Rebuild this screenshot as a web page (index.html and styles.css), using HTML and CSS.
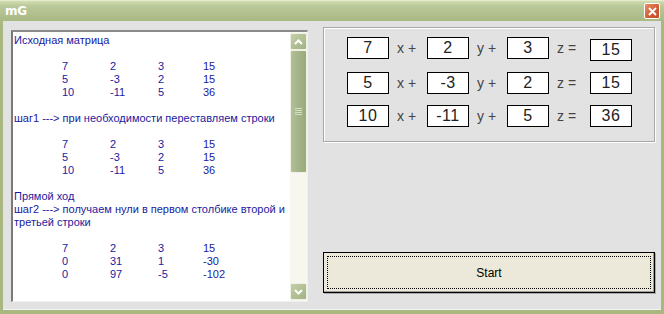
FILE: index.html
```html
<!doctype html>
<html lang="ru">
<head>
    <meta charset="UTF-8">
    <title>mG</title>
    <link rel="stylesheet" href="styles.css">
</head>
<body>

<div class="window">
    <div class="titlebar">
        <span class="title">mG</span>
        <div class="close">
            <svg width="9" height="9" viewBox="0 0 9 9">
                <path d="M1 1 L8 8 M8 1 L1 8" stroke="#fff" stroke-width="2"/>
            </svg>
        </div>
    </div>

    <div class="client">
        <div class="log">
            <div class="log-text">
                <p>Исходная матрица</p>
                <p>&nbsp;</p>
                <div class="mrow"><span>7</span><span>2</span><span>3</span><span>15</span></div>
                <div class="mrow"><span>5</span><span>-3</span><span>2</span><span>15</span></div>
                <div class="mrow"><span>10</span><span>-11</span><span>5</span><span>36</span></div>
                <p>&nbsp;</p>
                <p>шаг1 ---&gt; при необходимости переставляем строки</p>
                <p>&nbsp;</p>
                <div class="mrow"><span>7</span><span>2</span><span>3</span><span>15</span></div>
                <div class="mrow"><span>5</span><span>-3</span><span>2</span><span>15</span></div>
                <div class="mrow"><span>10</span><span>-11</span><span>5</span><span>36</span></div>
                <p>&nbsp;</p>
                <p>Прямой ход</p>
                <p>шаг2 ---&gt; получаем нули в первом столбике второй и третьей строки</p>
                <p>&nbsp;</p>
                <div class="mrow"><span>7</span><span>2</span><span>3</span><span>15</span></div>
                <div class="mrow"><span>0</span><span>31</span><span>1</span><span>-30</span></div>
                <div class="mrow"><span>0</span><span>97</span><span>-5</span><span>-102</span></div>
            </div>
            <div class="scroll">
                <div class="sbtn">
                    <svg width="9" height="6" viewBox="0 0 9 6"><path d="M1 5 L4.5 1.5 L8 5" fill="none" stroke="#fff" stroke-width="2"/></svg>
                </div>
                <div class="thumb">
                    <div class="grip"></div>
                </div>
                <div class="track"></div>
                <div class="sbtn">
                    <svg width="9" height="6" viewBox="0 0 9 6"><path d="M1 1 L4.5 4.5 L8 1" fill="none" stroke="#fff" stroke-width="2"/></svg>
                </div>
            </div>
        </div>

        <div class="side">
            <div class="group">
                <div class="eq">
                    <div class="cell">7</div><span class="lbl">x +</span>
                    <div class="cell">2</div><span class="lbl">y +</span>
                    <div class="cell">3</div><span class="lbl">z =</span>
                    <div class="cell res first">15</div>
                </div>
                <div class="eq">
                    <div class="cell">5</div><span class="lbl">x +</span>
                    <div class="cell">-3</div><span class="lbl">y +</span>
                    <div class="cell">2</div><span class="lbl">z =</span>
                    <div class="cell res">15</div>
                </div>
                <div class="eq">
                    <div class="cell">10</div><span class="lbl">x +</span>
                    <div class="cell">-11</div><span class="lbl">y +</span>
                    <div class="cell">5</div><span class="lbl">z =</span>
                    <div class="cell res">36</div>
                </div>
            </div>

            <div class="btn">
                <div class="focus">Start</div>
            </div>
        </div>
    </div>
</div>

</body>
</html>
```

FILE: styles.css
```css
*{
    padding: 0;
    margin: 0;
    box-sizing: border-box;
}

body{
    width: 664px;
    height: 314px;
    overflow: hidden;
    font-family: "Liberation Sans", Arial, sans-serif;
}

.window{
    width: 664px;
    height: 314px;
    display: flex;
    flex-direction: column;
    background: #a8b880;
}

.titlebar{
    height: 21px;
    display: flex;
    align-items: center;
    justify-content: space-between;
    padding: 0 4px 0 5px;
    background: linear-gradient(#d3ddb2 0%, #bac89a 25%, #b2c18e 60%, #a9b984 100%);
    border-top: 1px solid #e4ebcd;
}
.title{
    color: #fff;
    font-weight: bold;
    font-size: 12px;
    font-family: "DejaVu Sans", sans-serif;
    letter-spacing: -0.3px;
}
.close{
    width: 16px;
    height: 16px;
    display: flex;
    justify-content: center;
    align-items: center;
    border: 1px solid #fff;
    border-radius: 2px;
    background: linear-gradient(135deg, #e8906a, #cf5a31 60%, #c24d26);
}

.client{
    flex: 1;
    margin: 0 3px 4px 3px;
    background: #e2e2e2;
    display: grid;
    grid-template-columns: 297px 1fr;
    gap: 15px;
    padding: 6px 6px 0 8px;
    border-bottom: 1px solid #f4f4f4;
}

/* textbox */
.log{
    margin-top: 3px;
    height: 272px;
    display: flex;
    background: #fff;
    border-left: 2px solid #7a7a7a;
    border-top: 2px solid #8a8a8a;
    border-right: 1px solid #f0f0f0;
    border-bottom: 1px solid #f0f0f0;
}
.log-text{
    flex: 1;
    padding: 2px 2px 0 1px;
    color: #1a1a9e;
    font-size: 11px;
    line-height: 13px;
    overflow: hidden;
}
.mrow{
    display: grid;
    grid-template-columns: 48px 48px 45px auto;
    padding-left: 48px;
}

.scroll{
    width: 17px;
    display: flex;
    flex-direction: column;
    background: #f7f7ef;
    padding: 1px 0;
}
.sbtn{
    width: 17px;
    height: 17px;
    display: flex;
    justify-content: center;
    align-items: center;
    background: linear-gradient(135deg, #c3cfa8, #a2b285);
    border: 1px solid #eef1e4;
    border-radius: 2px;
}
.thumb{
    height: 123px;
    display: flex;
    justify-content: center;
    align-items: center;
    background: linear-gradient(90deg, #b2c097, #a4b488 50%, #9aab7d);
    border: 1px solid #eef1e4;
    border-radius: 2px;
}
.grip{
    width: 7px;
    height: 8px;
    background: repeating-linear-gradient(#d6dfc4 0 1px, transparent 1px 2px);
}
.track{
    flex: 1;
}

/* right side */
.side{
    display: flex;
    flex-direction: column;
    justify-content: space-between;
    padding-bottom: 16px;
}
.group{
    height: 115px;
    padding: 9px 0 0 23px;
    border: 1px solid #a8a8a8;
    box-shadow: inset 1px 1px #fff, 1px 1px #fff;
    display: flex;
    flex-direction: column;
    gap: 11px;
}
.eq{
    display: flex;
    align-items: flex-start;
}
.cell{
    width: 42px;
    height: 22px;
    background: #fff;
    border: 1px solid #000;
    display: flex;
    justify-content: center;
    align-items: center;
    font-size: 16px;
    letter-spacing: 0.5px;
    color: #222;
}
.cell.res{
    margin-left: 3px;
}
.cell.first{
    margin-top: 2px;
}
.lbl{
    width: 38px;
    padding-left: 8px;
    line-height: 22px;
    font-size: 14px;
    color: #444;
}

.btn{
    height: 41px;
    background: #ece9da;
    border: 1px solid #000;
    box-shadow: inset -1px -1px #9d9d9d, 1px 1px #aaa;
    padding: 3px;
}
.focus{
    height: 100%;
    border: 1px dotted #000;
    display: flex;
    justify-content: center;
    align-items: center;
    font-size: 12px;
    color: #000;
}
```
